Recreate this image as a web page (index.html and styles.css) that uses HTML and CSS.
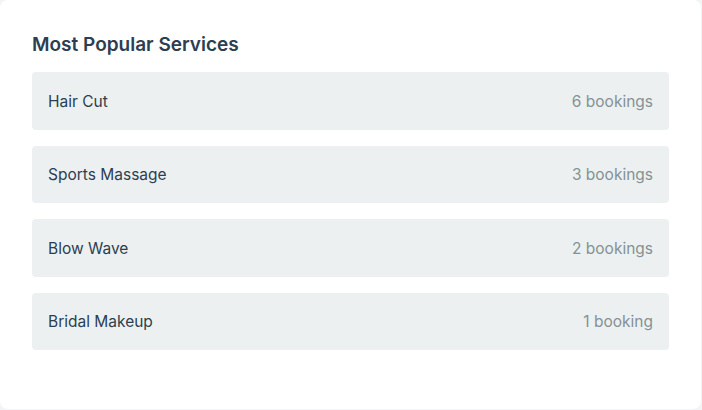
FILE: index.html
```html
<!DOCTYPE html>
<html lang="en">
<head>
<meta charset="utf-8">
<title>Most Popular Services</title>
<link rel="stylesheet" href="styles.css">
</head>
<body>
<section class="card">
  <h2 class="title">Most Popular Services</h2>
  <ul class="list">
    <li class="row"><span class="name">Hair Cut</span><span class="count">6 bookings</span></li>
    <li class="row"><span class="name">Sports Massage</span><span class="count">3 bookings</span></li>
    <li class="row"><span class="name">Blow Wave</span><span class="count">2 bookings</span></li>
    <li class="row"><span class="name">Bridal Makeup</span><span class="count">1 booking</span></li>
  </ul>
</section>
</body>
</html>
```

FILE: styles.css
```css
html, body {
  margin: 0;
  padding: 0;
  background: #f3f4f5;
}
body {
  font-family: Inter, "Noto Sans", sans-serif;
  width: 702px;
  height: 410px;
}
.card {
  box-sizing: border-box;
  width: 701px;
  height: 409px;
  background: #ffffff;
  border-radius: 8px;
  padding: 32px;
}
.title {
  margin: 0 0 14px;
  font-size: 19px;
  line-height: 26px;
  font-weight: 600;
  color: #2c3e50;
}
.list {
  list-style: none;
  margin: 0;
  padding: 0;
  display: flex;
  flex-direction: column;
  gap: 16px;
}
.row {
  display: flex;
  justify-content: space-between;
  align-items: center;
  padding: 16.5px 16px 15.5px;
  background: #ecf0f1;
  border-radius: 4px;
  font-size: 15.5px;
  line-height: 25.6px;
}
.name {
  color: #2c3e50;
}
.count {
  color: #859294;
}
```
